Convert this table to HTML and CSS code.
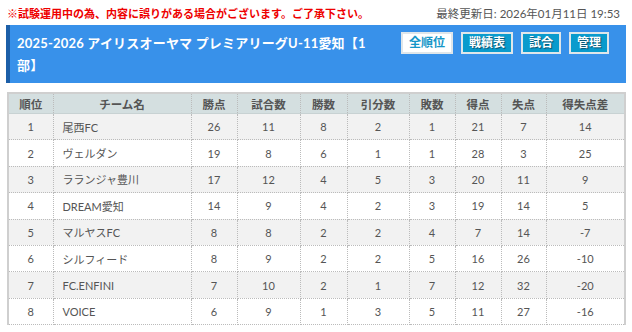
FILE: index.html
```html
<!DOCTYPE html>
<html lang="ja">
<head>
<meta charset="utf-8">
<title>順位表</title>
<link rel="stylesheet" href="styles.css">
</head>
<body>
<div class="page">
  <div class="topbar">
    <p class="notice">※試験運用中の為、内容に誤りがある場合がございます。ご了承下さい。</p>
    <p class="updated">最終更新日: 2026年01月11日 19:53</p>
  </div>
  <div class="headbox">
    <h1 class="title">2025-2026 アイリスオーヤマ プレミアリーグU-11愛知【1部】</h1>
    <div class="btns">
      <span class="btn btn-active">全順位</span>
      <span class="btn">戦績表</span>
      <span class="btn">試合</span>
      <span class="btn">管理</span>
    </div>
  </div>
  <table class="standings">
    <colgroup>
      <col class="c1"><col class="c2"><col class="c3"><col class="c4"><col class="c5">
      <col class="c6"><col class="c7"><col class="c8"><col class="c9"><col class="c10">
    </colgroup>
    <thead>
      <tr><th>順位</th><th>チーム名</th><th>勝点</th><th>試合数</th><th>勝数</th><th>引分数</th><th>敗数</th><th>得点</th><th>失点</th><th>得失点差</th></tr>
    </thead>
    <tbody>
      <tr><td>1</td><td class="team">尾西FC</td><td>26</td><td>11</td><td>8</td><td>2</td><td>1</td><td>21</td><td>7</td><td>14</td></tr>
      <tr><td>2</td><td class="team">ヴェルダン</td><td>19</td><td>8</td><td>6</td><td>1</td><td>1</td><td>28</td><td>3</td><td>25</td></tr>
      <tr><td>3</td><td class="team">ラランジャ豊川</td><td>17</td><td>12</td><td>4</td><td>5</td><td>3</td><td>20</td><td>11</td><td>9</td></tr>
      <tr><td>4</td><td class="team">DREAM愛知</td><td>14</td><td>9</td><td>4</td><td>2</td><td>3</td><td>19</td><td>14</td><td>5</td></tr>
      <tr><td>5</td><td class="team">マルヤスFC</td><td>8</td><td>8</td><td>2</td><td>2</td><td>4</td><td>7</td><td>14</td><td>-7</td></tr>
      <tr><td>6</td><td class="team">シルフィード</td><td>8</td><td>9</td><td>2</td><td>2</td><td>5</td><td>16</td><td>26</td><td>-10</td></tr>
      <tr><td>7</td><td class="team">FC.ENFINI</td><td>7</td><td>10</td><td>2</td><td>1</td><td>7</td><td>12</td><td>32</td><td>-20</td></tr>
      <tr><td>8</td><td class="team">VOICE</td><td>6</td><td>9</td><td>1</td><td>3</td><td>5</td><td>11</td><td>27</td><td>-16</td></tr>
    </tbody>
  </table>
</div>
</body>
</html>
```
FILE: styles.css
```css
html, body {
  margin: 0;
  padding: 0;
  background: #fff;
}
body {
  font-family: Lato, "Noto Sans CJK JP", sans-serif;
  color: #444;
}
.page {
  padding: 4px 6px 0 6px;
}
.topbar {
  display: flex;
  justify-content: space-between;
  align-items: center;
  height: 20px;
  padding: 0 6px 0 1px;
}
.notice {
  margin: 0;
  color: #ee0000;
  font-size: 11px;
  font-weight: bold;
  line-height: 20px;
}
.updated {
  margin: 0;
  color: #555;
  font-size: 11.5px;
  line-height: 20px;
}
.headbox {
  margin-top: 1px;
  display: flex;
  align-items: flex-start;
  background: #3891ea;
  border-left: 4px solid #1c5fa8;
  padding: 7px 17px 7px 7px;
  height: 44px;
}
.title {
  flex: 1;
  margin: 0;
  color: #fff;
  font-size: 13px;
  font-weight: bold;
  line-height: 22px;
  letter-spacing: 0.2px;
  max-width: 350px;
}
.btns {
  display: flex;
  gap: 8px;
  margin-left: auto;
}
.btn {
  display: block;
  height: 18px;
  line-height: 18px;
  padding: 0 6px;
  border: 2px solid #dfe6ea;
  background: #0a9bcd;
  color: #fff;
  font-size: 12px;
  font-weight: bold;
  text-shadow: 1px 1px 1px #0b4f6a;
}
.btn-active {
  background: #fff;
  color: #1596c8;
  text-shadow: none;
  padding: 0 6px;
}
.standings {
  margin: 9px 0 0 1px;
  width: 617px;
  table-layout: fixed;
  border-collapse: collapse;
  border-top: 2px solid #cfcfcf;
  border-left: 2px solid #cfcfcf;
  border-right: 2px solid #cfcfcf;
  font-size: 11px;
}
.c1 { width: 45px; }
.c2 { width: 138px; }
.c3 { width: 46px; }
.c4 { width: 63px; }
.c5 { width: 47px; }
.c6 { width: 62px; }
.c7 { width: 46px; }
.c8 { width: 46px; }
.c9 { width: 45px; }
.c10 { width: 79px; }
.standings th {
  background: #d4dfe0;
  color: #555;
  font-weight: bold;
  font-size: 11.5px;
  height: 19px;
  padding: 0;
  border-left: 1px dotted #bbb;
  border-right: 1px dotted #bbb;
  border-bottom: 1px solid #c8d2d3;
  text-align: center;
}
.standings td {
  height: 25.4px;
  padding: 0;
  text-align: center;
  color: #555;
  border: 1px dotted #bbb;
}
.standings td.team {
  text-align: left;
  padding-left: 9px;
}
.standings tbody tr:nth-child(odd) td {
  background: #f2f2f2;
}
.standings tbody tr:nth-child(even) td {
  background: #fff;
}
```
